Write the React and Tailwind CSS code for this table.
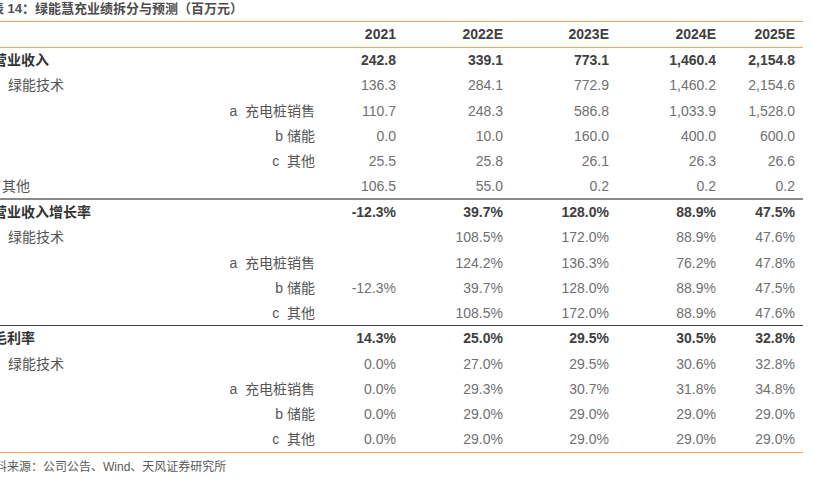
const rows = [
  { label: "营业收入", kind: "main", vals: ["242.8", "339.1", "773.1", "1,460.4", "2,154.8"] },
  { label: "绿能技术", kind: "sub", vals: ["136.3", "284.1", "772.9", "1,460.2", "2,154.6"] },
  { label: "a  充电桩销售", kind: "item", vals: ["110.7", "248.3", "586.8", "1,033.9", "1,528.0"] },
  { label: "b 储能", kind: "item", vals: ["0.0", "10.0", "160.0", "400.0", "600.0"] },
  { label: "c  其他", kind: "item", vals: ["25.5", "25.8", "26.1", "26.3", "26.6"] },
  { label: "其他", kind: "other", vals: ["106.5", "55.0", "0.2", "0.2", "0.2"], line: "gray" },
  { label: "营业收入增长率", kind: "main", vals: ["-12.3%", "39.7%", "128.0%", "88.9%", "47.5%"] },
  { label: "绿能技术", kind: "sub", vals: ["", "108.5%", "172.0%", "88.9%", "47.6%"] },
  { label: "a  充电桩销售", kind: "item", vals: ["", "124.2%", "136.3%", "76.2%", "47.8%"] },
  { label: "b 储能", kind: "item", vals: ["-12.3%", "39.7%", "128.0%", "88.9%", "47.5%"] },
  { label: "c  其他", kind: "item", vals: ["", "108.5%", "172.0%", "88.9%", "47.6%"], line: "dark" },
  { label: "毛利率", kind: "main", vals: ["14.3%", "25.0%", "29.5%", "30.5%", "32.8%"] },
  { label: "绿能技术", kind: "sub", vals: ["0.0%", "27.0%", "29.5%", "30.6%", "32.8%"] },
  { label: "a  充电桩销售", kind: "item", vals: ["0.0%", "29.3%", "30.7%", "31.8%", "34.8%"] },
  { label: "b 储能", kind: "item", vals: ["0.0%", "29.0%", "29.0%", "29.0%", "29.0%"] },
  { label: "c  其他", kind: "item", vals: ["0.0%", "29.0%", "29.0%", "29.0%", "29.0%"], line: "orange" },
];

const years = ["2021", "2022E", "2023E", "2024E", "2025E"];
const cols = "grid grid-cols-[333px_80px_107px_106px_107px_79px]";
const font = { fontFamily: '"Liberation Sans", "Noto Sans CJK SC", sans-serif' };

function labelClass(kind) {
  if (kind === "main") return "pl-[2px] font-bold text-[#333]";
  if (kind === "sub") return "pl-[17px] text-[#555]";
  if (kind === "other") return "pl-[11px] text-[#555]";
  return "text-right pr-[9px] text-[#555] whitespace-pre";
}

export default function App() {
  return (
    <div className="w-[813px] h-[478px] bg-white overflow-hidden" style={font}>
      <div className="-ml-[9px] w-[812px]">
        <div className="h-[21px] text-[13px] font-bold text-[#4d4d4d] leading-[18px]">
          表 14：绿能慧充业绩拆分与预测（百万元）
        </div>
        <div className={`${cols} h-[27px] items-center border-y-[1.5px] border-[#f5a462] text-[14px] text-[#404040] font-semibold`}>
          <div />
          {years.map((y) => (
            <div key={y} className="text-right pr-[8px]">{y}</div>
          ))}
        </div>
        {rows.map((r, i) => {
          const line =
            r.line === "gray"
              ? "border-b-2 border-[#8a8a8a]"
              : r.line === "dark"
              ? "border-b-[1.5px] border-[#404040]"
              : r.line === "orange"
              ? "border-b-[1.5px] border-[#f5a462]"
              : "";
          const main = r.kind === "main";
          return (
            <div key={i} className={`${cols} h-[25.3px] items-center text-[14px] ${line}`}>
              <div className={labelClass(r.kind)}>{r.label}</div>
              {r.vals.map((v, j) => (
                <div
                  key={j}
                  className={`text-right pr-[8px] ${main ? "font-bold text-[#404040]" : "text-[#707070]"}`}
                >
                  {v}
                </div>
              ))}
            </div>
          );
        })}
        <div className="pt-[5px] -ml-[8px] text-[12px] text-[#595959]">
          资料来源：公司公告、Wind、天风证券研究所
        </div>
      </div>
    </div>
  );
}
